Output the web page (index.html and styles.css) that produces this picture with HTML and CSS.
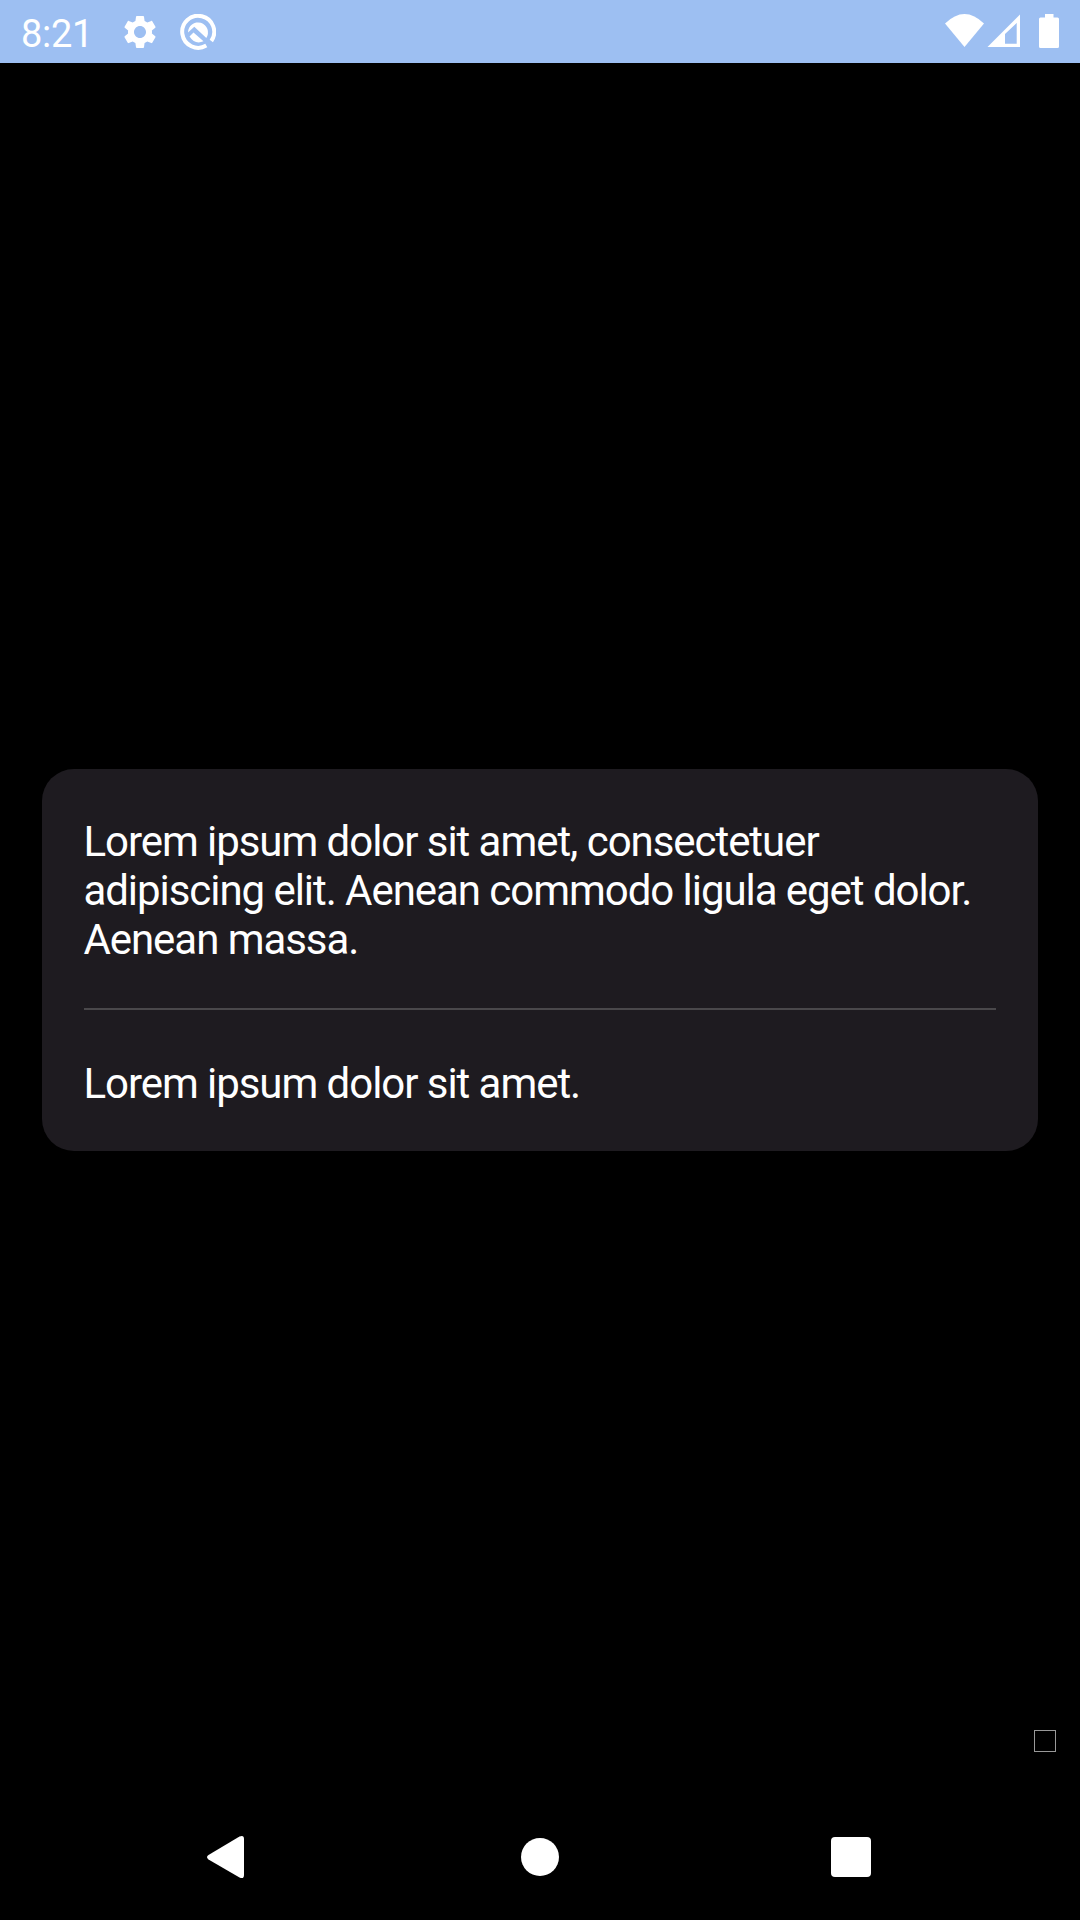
FILE: index.html
```html
<!DOCTYPE html>
<html lang="en">
<head>
<meta charset="utf-8">
<title>Dialog</title>
<link rel="stylesheet" href="styles.css">
</head>
<body>
<header class="status">
  <span class="clock">8:21</span>
  <svg class="gear" viewBox="0 0 24 24"><path fill="#fff" d="M19.14 12.94c.04-.3.06-.61.06-.94 0-.32-.02-.64-.07-.94l2.03-1.58c.18-.14.23-.41.12-.61l-1.92-3.32c-.12-.22-.37-.29-.59-.22l-2.39.96c-.5-.38-1.03-.7-1.62-.94l-.36-2.54c-.04-.24-.24-.41-.48-.41h-3.84c-.24 0-.43.17-.47.41l-.36 2.54c-.59.24-1.13.57-1.62.94l-2.39-.96c-.22-.08-.47 0-.59.22L2.74 8.87c-.12.21-.08.47.12.61l2.03 1.58c-.05.3-.09.63-.09.94s.02.64.07.94l-2.03 1.58c-.18.14-.23.41-.12.61l1.92 3.32c.12.22.37.29.59.22l2.39-.96c.5.38 1.03.7 1.62.94l.36 2.54c.05.24.24.41.48.41h3.84c.24 0 .44-.17.47-.41l.36-2.54c.59-.24 1.13-.56 1.62-.94l2.39.96c.22.08.47 0 .59-.22l1.92-3.32c.12-.22.07-.47-.12-.61l-2.01-1.58zM12 15.6c-1.98 0-3.6-1.62-3.6-3.6s1.62-3.6 3.6-3.6 3.6 1.62 3.6 3.6-1.62 3.6-3.6 3.6z"/></svg>
  <svg class="app" viewBox="0 0 36 36"><path fill="none" stroke="#fff" stroke-width="4" d="M26.300 31.600A16 16 0 1 1 31.300 27"/><path fill="#fff" d="M8 18.500A10 10 0 1 1 26.300 24L14.300 12.800Z"/><path fill="#fff" d="M9.500 22.500L13.500 18.500L23.500 27.300Q15 31 9.500 22.500Z"/></svg>
  <svg class="system" viewBox="940 0 120 63"><g fill="#fff"><path d="M945 23.500Q964.500 4.500 984 23.500L964.500 47Z"/><path fill-rule="evenodd" d="M1020 14.500V47H987.500ZM1016.700 23L1005 34V43.700H1016.700Z"/><path d="M1045 17.500V14H1053.500V17.500H1057.500Q1059 17.500 1059 19V46.500Q1059 48 1057.500 48H1040.500Q1039 48 1039 46.500V19Q1039 17.500 1040.500 17.500Z"/></g></svg>
</header>
<main class="content">
  <section class="card">
    <p class="text">Lorem ipsum dolor sit amet, consectetuer<br>adipiscing elit. Aenean commodo ligula eget dolor.<br>Aenean massa.</p>
    <hr class="divider">
    <p class="text">Lorem ipsum dolor sit amet.</p>
  </section>
  <span class="box"></span>
</main>
<nav class="nav">
  <svg viewBox="0 0 1080 126"><g fill="#fff"><path d="M208.500 61L239.500 42.500Q244 40.500 244 45V81Q244 85.500 239.500 83.500L208.500 65.500Q205.500 63.200 208.500 61Z"/><circle cx="540" cy="63" r="19"/><rect x="831" y="43" width="40" height="40" rx="4"/></g></svg>
</nav>
</body>
</html>
```
FILE: styles.css
```css
body { margin: 0; height: 1920px; display: flex; flex-direction: column; background: #000; color: #fff; font-family: Roboto, sans-serif; overflow: hidden; }
.status { height: 63px; box-sizing: border-box; background: #9dbff2; display: flex; align-items: center; padding: 0 20px 0 21px; }
.clock { font-size: 38px; width: 99px; padding-top: 4px; letter-spacing: -0.3px; font-weight: 400; }
.gear { width: 40px; height: 40px; margin-right: 20px; }
.app { width: 36px; height: 36px; }
.system { width: 120px; height: 63px; margin-left: auto; }
.content { flex: 1; position: relative; padding: 706px 42px 0; }
.card { height: 382px; box-sizing: border-box; padding: 48px 42px; border-radius: 32px; background: #1e1b20; }
.text { margin: 0 0 0 -0.6px; font-size: 42px; line-height: 49px; letter-spacing: -1.05px; white-space: nowrap; }
.divider { border: 0; height: 2px; background: #4a484b; margin: 44px 0 49px; }
.box { position: absolute; left: 1034px; top: 1667px; width: 20px; height: 20px; border: 1px solid #999; }
.nav { height: 126px; }
.nav svg { display: block; width: 1080px; height: 126px; }
```
